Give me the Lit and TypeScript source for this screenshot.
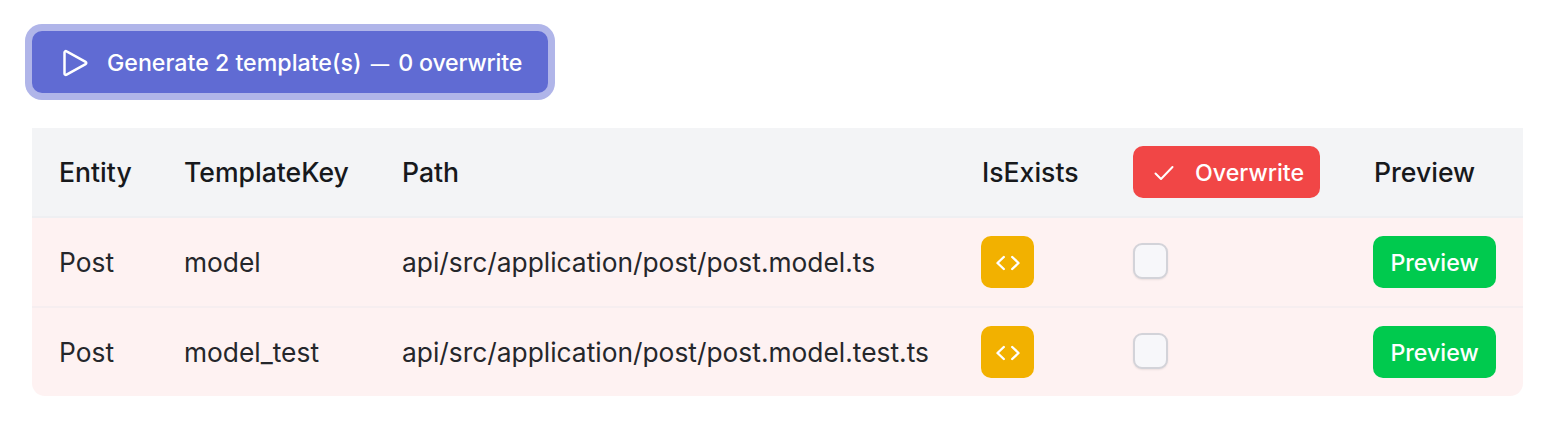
import {html, css, LitElement} from 'lit';
import {customElement} from 'lit/decorators.js';

const rows = [
  {entity: 'Post', key: 'model', path: 'api/src/application/post/post.model.ts'},
  {entity: 'Post', key: 'model_test', path: 'api/src/application/post/post.model.test.ts'},
];

@customElement('app-root')
export class AppRoot extends LitElement {
  static styles = css`
    :host {
      display: block;
      padding: 31px 25px 0 32px;
      font-family: Inter, "Liberation Sans", sans-serif;
      color: #25272b;
    }
    * {
      box-sizing: border-box;
    }
    button {
      font-family: inherit;
      border: 0;
      padding: 1px 0 0;
      display: inline-flex;
      align-items: center;
      justify-content: center;
      color: #fff;
    }
    .generate {
      width: 516px;
      height: 62px;
      gap: 18px;
      padding-left: 3px;
      border-radius: 10px;
      background: #606bd3;
      box-shadow: 0 0 0 7px #b0b5e9;
      font-size: 23.2px;
      font-weight: 500;
    }
    .dash {
      font-size: 18.4px;
      margin: 0 3px;
    }
    .tail {
      letter-spacing: -0.2px;
    }
    table {
      width: 1491px;
      margin-top: 35px;
      border-collapse: separate;
      border-spacing: 0;
      table-layout: fixed;
      font-size: 26.35px;
    }
    th {
      height: 90px;
      padding: 0 0 0 27px;
      text-align: left;
      font-size: 26.6px;
      font-weight: 500;
      color: #17191c;
      background: #f3f4f6;
      border-bottom: 2px solid #eeeff2;
    }
    td {
      height: 90px;
      padding: 0 0 0 27px;
      background: #fef2f2;
      border-bottom: 2px solid #f6eef0;
    }
    tr:last-child td {
      height: 88px;
      border-bottom: 0;
    }
    tr:last-child td:first-child {
      border-bottom-left-radius: 13px;
    }
    tr:last-child td:last-child {
      border-bottom-right-radius: 13px;
    }
    .overwrite {
      width: 187px;
      height: 52px;
      gap: 21px;
      padding-left: 5px;
      border-radius: 10px;
      background: #f14646;
      font-size: 23.2px;
      font-weight: 500;
      vertical-align: middle;
    }
    .exists {
      width: 53px;
      height: 52px;
      margin-left: -1px;
      border-radius: 10px;
      background: #f2b100;
      vertical-align: middle;
    }
    .check {
      display: block;
      width: 35px;
      height: 36px;
      margin: 0 0 2px;
      border: 2px solid #d3d3d9;
      border-radius: 9px;
      background: #f7f7fa;
      box-shadow: 0 1px 2px rgba(0, 0, 0, 0.08);
    }
    .preview {
      width: 123px;
      height: 52px;
      margin-left: -1px;
      border-radius: 10px;
      background: #00ca4e;
      font-size: 23.2px;
      font-weight: 500;
      vertical-align: middle;
    }
  `;

  render() {
    return html`
      <button class="generate">
        <svg width="28" height="28" viewBox="0 0 28 28" fill="none" stroke="#fff" stroke-width="2.5" stroke-linecap="round" stroke-linejoin="round">
          <path d="M3.5 3.5 C3.5 2.3 4.6 1.7 5.6 2.3 L24.6 12.9 C25.5 13.4 25.5 14.6 24.6 15.1 L5.6 25.7 C4.6 26.3 3.5 25.7 3.5 24.5 Z" />
        </svg>
        <span>Generate 2 template(s) <span class="dash">—</span> <span class="tail">0 overwrite</span></span>
      </button>
      <table>
        <colgroup>
          <col style="width:125px" />
          <col style="width:218px" />
          <col style="width:580px" />
          <col style="width:151px" />
          <col style="width:241px" />
          <col style="width:176px" />
        </colgroup>
        <thead>
          <tr>
            <th>Entity</th>
            <th>TemplateKey</th>
            <th>Path</th>
            <th>IsExists</th>
            <th>
              <button class="overwrite">
                <svg width="20" height="16" viewBox="0 0 20 16" fill="none" stroke="#fff" stroke-width="2" stroke-linecap="round" stroke-linejoin="round">
                  <path d="M1.5 8.5 L7 14 L18.5 2" />
                </svg>
                <span>Overwrite</span>
              </button>
            </th>
            <th>Preview</th>
          </tr>
        </thead>
        <tbody>
          ${rows.map(
            (r) => html`
              <tr>
                <td>${r.entity}</td>
                <td>${r.key}</td>
                <td>${r.path}</td>
                <td>
                  <button class="exists">
                    <svg width="26" height="16" viewBox="0 0 26 16" fill="none" stroke="#fff" stroke-width="2.4" stroke-linecap="round" stroke-linejoin="round">
                      <path d="M8.8 2 L2.5 8 L8.8 14 M17.2 2 L23.5 8 L17.2 14" />
                    </svg>
                  </button>
                </td>
                <td><div class="check"></div></td>
                <td><button class="preview">Preview</button></td>
              </tr>
            `
          )}
        </tbody>
      </table>
    `;
  }
}
